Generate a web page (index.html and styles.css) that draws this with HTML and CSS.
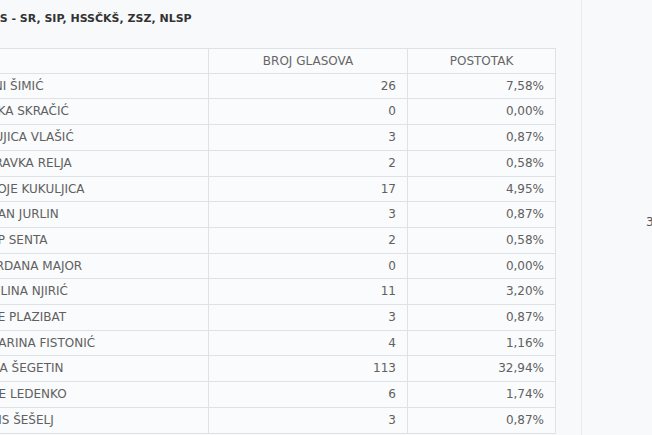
FILE: index.html
```html
<!DOCTYPE html>
<html lang="hr">
<head>
<meta charset="utf-8">
<title>Rezultati</title>
<link rel="stylesheet" href="styles.css">
</head>
<body>
<div class="page">
  <section class="main">
    <h3 class="title">HSS - SR, SIP, HSSČKŠ, ZSZ, NLSP</h3>
    <table class="results">
      <thead>
        <tr><th class="c-name"></th><th class="c-votes">BROJ GLASOVA</th><th class="c-pct">POSTOTAK</th></tr>
      </thead>
      <tbody>
        <tr><td>TONI ŠIMIĆ</td><td class="num">26</td><td class="num">7,58%</td></tr>
        <tr><td>JANKA SKRAČIĆ</td><td class="num">0</td><td class="num">0,00%</td></tr>
        <tr><td>DRUJICA VLAŠIĆ</td><td class="num">3</td><td class="num">0,87%</td></tr>
        <tr><td>ZDRAVKA RELJA</td><td class="num">2</td><td class="num">0,58%</td></tr>
        <tr><td>MILOJE KUKULJICA</td><td class="num">17</td><td class="num">4,95%</td></tr>
        <tr><td>MILAN JURLIN</td><td class="num">3</td><td class="num">0,87%</td></tr>
        <tr><td>FILIP SENTA</td><td class="num">2</td><td class="num">0,58%</td></tr>
        <tr><td>GORDANA MAJOR</td><td class="num">0</td><td class="num">0,00%</td></tr>
        <tr><td>PAULINA NJIRIĆ</td><td class="num">11</td><td class="num">3,20%</td></tr>
        <tr><td>JURE PLAZIBAT</td><td class="num">3</td><td class="num">0,87%</td></tr>
        <tr><td>KATARINA FISTONIĆ</td><td class="num">4</td><td class="num">1,16%</td></tr>
        <tr><td>LUKA ŠEGETIN</td><td class="num">113</td><td class="num">32,94%</td></tr>
        <tr><td>DUJE LEDENKO</td><td class="num">6</td><td class="num">1,74%</td></tr>
        <tr><td>ELVIS ŠEŠELJ</td><td class="num">3</td><td class="num">0,87%</td></tr>
      </tbody>
    </table>
  </section>
  <aside class="side">
    <div class="total">343</div>
  </aside>
</div>
</body>
</html>
```
FILE: styles.css
```css
html, body {
  margin: 0;
  padding: 0;
  background: #f8f9fb;
}
body {
  font-family: "DejaVu Sans", sans-serif;
  font-size: 12px;
  color: #606060;
  overflow: hidden;
}
.page {
  display: flex;
  width: 652px;
  height: 435px;
  overflow: hidden;
}
.main {
  flex: 0 0 auto;
  width: 617px;
  margin-left: -35px;
  padding: 0 25px 0 0;
  border-right: 1px solid #e9ebee;
  box-sizing: border-box;
}
.title {
  margin: 12px 0 0 0;
  padding-left: 18px;
  font-size: 11px;
  line-height: 14px;
  font-weight: bold;
  color: #333;
  height: 36px;
  white-space: nowrap;
}
.results {
  width: 591px;
  border-collapse: collapse;
  background: #fafbfc;
}
.results th,
.results td {
  border: 1px solid #dfe1e5;
  padding: 4px 11px;
  line-height: 16.7px;
  font-weight: normal;
  white-space: nowrap;
}
.results th {
  color: #666;
  text-align: center;
  padding-top: 4px;
  padding-bottom: 3px;
}
.c-name { width: 220px; }
.c-votes { width: 176px; }
.c-pct { width: 125px; }
.results td.num { text-align: right; }
.side {
  flex: 1 1 auto;
  display: flex;
  align-items: center;
  padding-left: 64px;
}
.total {
  color: #555;
  white-space: nowrap;
  margin-top: 9px;
}
```
